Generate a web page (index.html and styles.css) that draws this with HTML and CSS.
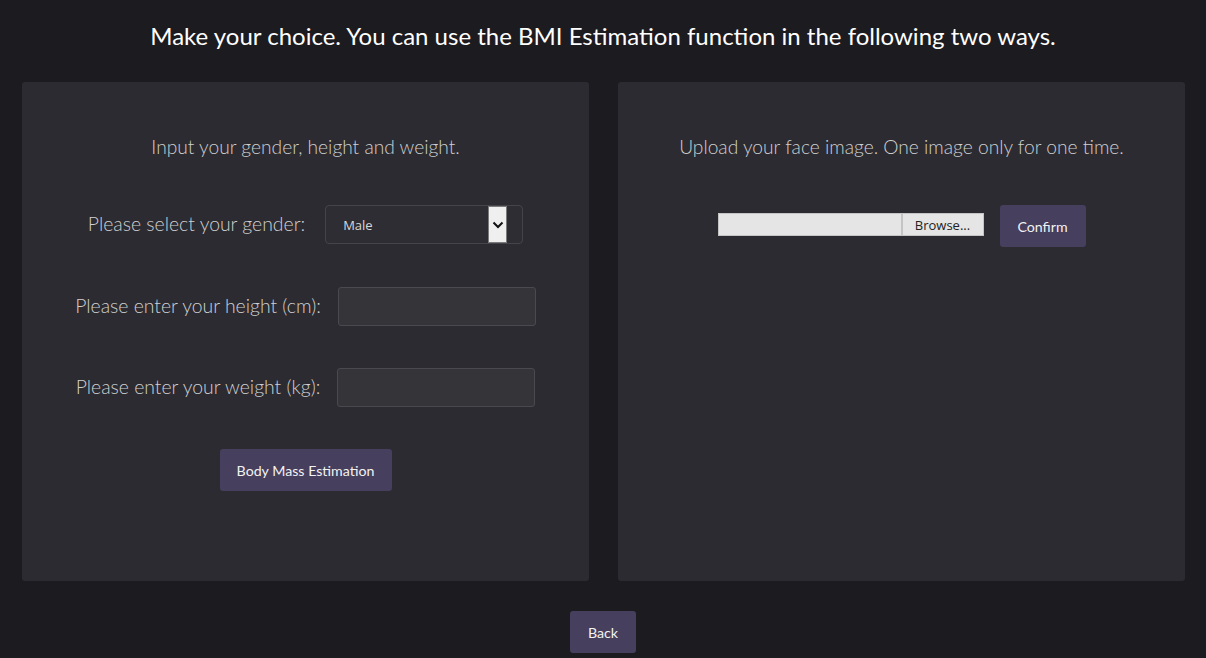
FILE: index.html
```html
<!DOCTYPE html>
<html lang="en">
<head>
<meta charset="utf-8">
<title>BMI Estimation</title>
<link rel="stylesheet" href="styles.css">
</head>
<body>
  <h1 class="title">Make your choice. You can use the BMI Estimation function in the following two ways.</h1>
  <main class="panels">
    <section class="panel">
      <h2 class="panel-heading">Input your gender, height and weight.</h2>
      <div class="row row-gender">
        <label class="label">Please select your gender:</label>
        <div class="select">
          <span class="select-value">Male</span>
          <span class="select-arrow">
            <svg width="12" height="8" viewBox="0 0 12 8"><path d="M1.5 1.5 L6 6 L10.5 1.5" fill="none" stroke="#111" stroke-width="2"/></svg>
          </span>
        </div>
      </div>
      <div class="row row-height">
        <label class="label">Please enter your height (cm):</label>
        <input class="field" type="text">
      </div>
      <div class="row row-weight">
        <label class="label">Please enter your weight (kg):</label>
        <input class="field" type="text">
      </div>
      <button class="btn btn-estimate">Body Mass Estimation</button>
    </section>
    <section class="panel">
      <h2 class="panel-heading">Upload your face image. One image only for one time.</h2>
      <div class="upload-row">
        <div class="file">
          <span class="file-name"></span>
          <span class="file-browse">Browse...</span>
        </div>
        <button class="btn btn-confirm">Confirm</button>
      </div>
    </section>
  </main>
  <div class="footer">
    <button class="btn btn-back">Back</button>
  </div>
</body>
</html>
```
FILE: styles.css
```css
* { box-sizing: border-box; }
html, body { height: 100%; }
body {
  margin: 0;
  background: #1c1b20;
  font-family: "Lato", "Open Sans", sans-serif;
  color: #fff;
  overflow: hidden;
}
.title {
  margin: 20px 0 0;
  height: 32px;
  line-height: 32px;
  font-size: 24px;
  font-weight: 400;
  text-align: center;
  color: #fff;
}
.panels {
  display: grid;
  grid-template-columns: 567px 567px;
  gap: 29px;
  padding: 0 0 0 22px;
  margin-top: 30px;
}
.panel {
  height: 499px;
  background: #2c2b32;
  border-radius: 3px;
  display: flex;
  flex-direction: column;
  align-items: center;
  padding-top: 50px;
}
.panel-heading {
  margin: 0 0 43px;
  height: 30px;
  line-height: 30px;
  font-size: 19.2px;
  font-weight: 300;
  color: #cfcfcf;
}
.row {
  display: flex;
  align-items: center;
  gap: 20px;
  margin-bottom: 42px;
  height: 39px;
}
.row-gender { margin-bottom: 43px; }
.row-height, .row-weight { gap: 17px; }
.label {
  font-size: 19.4px;
  font-weight: 300;
  color: #d0d0d0;
  margin-top: -3px;
}
.select {
  width: 198px;
  height: 39px;
  border: 1px solid #45444b;
  border-radius: 4px;
  background: #2e2d33;
  display: flex;
  align-items: center;
  padding-left: 17px;
  padding-right: 15px;
}
.select-value {
  flex: 1;
  font-family: "Open Sans", sans-serif;
  font-size: 13px;
  color: #d8d8d8;
}
.select-arrow {
  width: 19px;
  height: 37px;
  background: #efefef;
  border: 1px solid #7a7a7a;
  display: flex;
  align-items: center;
  justify-content: center;
}
.field {
  width: 198px;
  height: 39px;
  border: 1px solid #4a494f;
  border-radius: 3px;
  background: #353439;
  outline: none;
}
.btn {
  height: 42px;
  border: none;
  border-radius: 3px;
  background: #463f5d;
  color: #f2f2f2;
  font-family: "Lato", "Open Sans", sans-serif;
  font-size: 14.2px;
  padding: 0;
}
.btn-estimate { width: 172px; }
.btn-confirm { width: 86px; }
.btn-back { width: 66px; }
.upload-row {
  display: flex;
  align-items: flex-start;
  gap: 16px;
}
.file {
  display: flex;
  height: 23px;
  width: 266px;
  border: 1px solid #c4c4c4;
  background: #e5e5e5;
  margin-top: 8px;
}
.file-name { flex: 1; }
.file-browse {
  width: 82px;
  border-left: 2px solid #c4c4c4;
  font-family: "Open Sans", sans-serif;
  font-size: 13px;
  color: #222;
  display: flex;
  align-items: center;
  justify-content: center;
}
.footer {
  display: flex;
  justify-content: center;
  margin-top: 30px;
}
```
